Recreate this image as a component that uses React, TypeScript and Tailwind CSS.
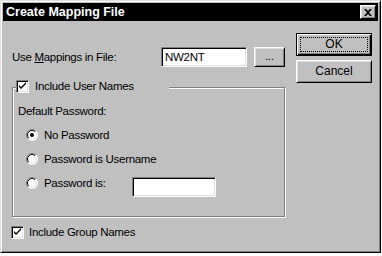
import React from "react";

const raised =
  "border border-t-white border-l-white border-r-black border-b-black shadow-[inset_1px_1px_#dfdfdf,inset_-1px_-1px_#808080]";
const sunken =
  "border border-t-[#808080] border-l-[#808080] border-r-white border-b-white shadow-[inset_1px_1px_#000,inset_-1px_-1px_#dfdfdf]";

function CheckBox({ checked }: { checked: boolean }) {
  return (
    <div className={`w-[13px] h-[13px] shrink-0 bg-white ${sunken}`}>
      {checked && (
        <svg width="11" height="11" viewBox="0 0 11 11">
          <path d="M2 4 L2 6 L4 8 L9 3 L9 1 L4 6 Z" fill="#000" />
        </svg>
      )}
    </div>
  );
}

function Radio({ checked }: { checked: boolean }) {
  return (
    <svg width="12" height="12" viewBox="0 0 12 12" className="shrink-0">
      <circle cx="6" cy="6" r="5.5" fill="#fff" />
      <path d="M2.1 9.9 A5.5 5.5 0 0 1 9.9 2.1" stroke="#808080" fill="none" />
      <path d="M9.9 2.1 A5.5 5.5 0 0 1 2.1 9.9" stroke="#fff" fill="none" />
      <path d="M2.8 9.2 A4.5 4.5 0 0 1 9.2 2.8" stroke="#000" fill="none" />
      <path d="M9.2 2.8 A4.5 4.5 0 0 1 2.8 9.2" stroke="#dfdfdf" fill="none" />
      {checked && <circle cx="6" cy="6" r="2" fill="#000" />}
    </svg>
  );
}

export default function App() {
  return (
    <div
      className="w-[382px] h-[256px] bg-white text-black text-[11.5px] leading-[13px] tracking-[-0.3px]"
      style={{ fontFamily: '"Liberation Sans", Arial, sans-serif' }}
    >
      <div className="w-[381px] h-[253px] bg-[#c0c0c0] p-[2px] border border-t-[#dfdfdf] border-l-[#dfdfdf] border-r-black border-b-black shadow-[inset_1px_1px_#fff,inset_-1px_-1px_#808080] flex flex-col">
        {/* title bar */}
        <div className="h-[18px] bg-black flex items-center justify-between pl-[3px] pr-[2px]">
          <span className="text-white font-bold text-[12.5px] leading-[14px] tracking-normal">Create Mapping File</span>
          <div className={`w-[16px] h-[14px] bg-[#c0c0c0] flex items-center justify-center ${raised}`}>
            <svg width="8" height="7" viewBox="0 0 8 7">
              <path d="M0 0 H2 L4 2 L6 0 H8 L5 3.5 L8 7 H6 L4 5 L2 7 H0 L3 3.5 Z" fill="#000" />
            </svg>
          </div>
        </div>

        {/* body */}
        <div className="flex pl-[9px]">
          <div className="w-[274px] flex flex-col">
            <div className="mt-[26px] flex items-center h-[20px]">
              <span className="w-[149px]">
                Use <span className="underline">M</span>appings in File:
              </span>
              <div className={`w-[86px] h-[20px] bg-white flex items-center pl-[3px] ${sunken}`}>NW2NT</div>
              <div className={`ml-[7px] w-[31px] h-[20px] flex items-center justify-center pb-[2px] ${raised}`}>...</div>
            </div>

            <div className="relative mt-[20px] w-[273px] h-[130px] border border-[#808080] shadow-[1px_1px_0_#fff,inset_1px_1px_0_#fff] pt-[17px] pl-[5px]">
              <div className="absolute left-[3px] top-[-8px] w-[153px] h-[13px] bg-[#c0c0c0] flex items-center gap-[6px]">
                <CheckBox checked />
                <span>Include User Names</span>
              </div>
              <div>Default Password:</div>
              <div className="mt-[5px] ml-[8px] flex flex-col">
                <div className="h-[24px] flex items-center gap-[6px]">
                  <Radio checked />
                  <span>No Password</span>
                </div>
                <div className="h-[24px] flex items-center gap-[6px]">
                  <Radio checked={false} />
                  <span>Password is Username</span>
                </div>
                <div className="h-[24px] flex items-center gap-[6px]">
                  <Radio checked={false} />
                  <span className="w-[82px]">Password is:</span>
                  <div className={`w-[84px] h-[20px] mt-[7px] bg-white ${sunken}`} />
                </div>
              </div>
            </div>

            <div className="mt-[9px] -ml-[1px] flex items-center gap-[5px] h-[13px]">
              <CheckBox checked />
              <span>Include Group Names</span>
            </div>
          </div>

          <div className="ml-[10px] mt-[12px] flex flex-col gap-[4px] tracking-normal">
            <div className="relative w-[76px] h-[23px] flex items-center justify-center border border-black shadow-[inset_1px_1px_#fff,inset_-1px_-1px_#000,inset_-2px_-2px_#808080]">
              <div className="absolute inset-[3px] border border-dotted border-black" />
              <span className="text-[12px]">OK</span>
            </div>
            <div className={`w-[76px] h-[23px] flex items-center justify-center text-[12px] ${raised}`}>Cancel</div>
          </div>
        </div>
      </div>
    </div>
  );
}
